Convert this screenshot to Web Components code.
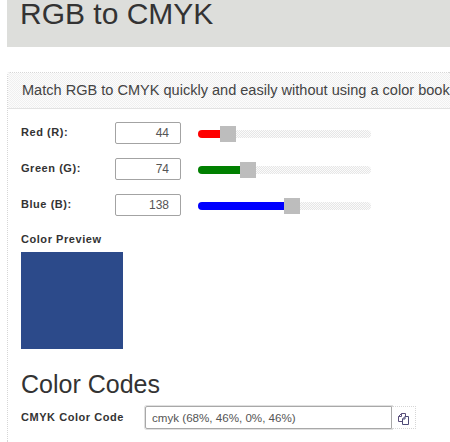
<!DOCTYPE html>
<html>
<head>
<meta charset="utf-8">
<title>RGB to CMYK</title>
<style>
    html, body { margin: 0; height: 442px; overflow: hidden; background: #fff; }
    body { font-family: "Liberation Sans", Arial, sans-serif; color: #333; }
</style>
</head>
<body>
<page-title>RGB to CMYK</page-title>
<tool-card heading="Match RGB to CMYK quickly and easily without using a color book">
    <color-row label="Red (R):" value="44" color="#ff0000"></color-row>
    <color-row label="Green (G):" value="74" color="#008000"></color-row>
    <color-row label="Blue (B):" value="138" color="#0000ff"></color-row>
    <color-preview label="Color Preview" color="#2c4a8a"></color-preview>
    <code-row heading="Color Codes" label="CMYK Color Code" value="cmyk (68%, 46%, 0%, 46%)"></code-row>
</tool-card>

<script>
class PageTitle extends HTMLElement {
    constructor() {
        super();
        this.attachShadow({ mode: "open" });
    }

    connectedCallback() {
        this.shadowRoot.innerHTML = `
            <style>
                :host {
                    display: block;
                    box-sizing: border-box;
                    width: 443px;
                    height: 47px;
                    margin-left: 7px;
                    padding-left: 13px;
                    background: #dddedb;
                    color: #333;
                    font-size: 30px;
                    line-height: 28px;
                }
            </style>
            <slot></slot>
        `;
    }
}

class ToolCard extends HTMLElement {
    constructor() {
        super();
        this.attachShadow({ mode: "open" });
    }

    connectedCallback() {
        this.shadowRoot.innerHTML = `
            <style>
                :host {
                    display: block;
                    box-sizing: border-box;
                    width: 443px;
                    height: 370px;
                    margin: 25px 0 0 7px;
                    border: 1px dotted #d6d6d6;
                    border-right: 0;
                    border-bottom: 0;
                    border-radius: 3px 0 0 0;
                }
                .head {
                    box-sizing: border-box;
                    height: 36px;
                    padding: 0 14px;
                    /* the reference is a dithered gif, so the grey is a fine checker */
                    background: repeating-conic-gradient(#f0f0f0 0 25%, #fcfcfc 0 50%) 0 0 / 2px 2px;
                    border-bottom: 1px solid #e2e2e2;
                    color: #444;
                    font-size: 14.55px;
                    line-height: 35px;
                    white-space: nowrap;
                }
                .body {
                    padding: 13px 13px 0;
                }
            </style>
            <div class="head">${this.getAttribute("heading")}</div>
            <div class="body"><slot></slot></div>
        `;
    }
}

class ColorSlider extends HTMLElement {
    constructor() {
        super();
        this.attachShadow({ mode: "open" });
    }

    connectedCallback() {
        // same placement as a jquery ui handle: value share of track, pulled back half a handle
        const left = Math.round(this.getAttribute("value") / 255 * 173);
        this.shadowRoot.innerHTML = `
            <style>
                :host {
                    display: block;
                    position: relative;
                    width: 173px;
                    height: 8px;
                    margin-top: 2px;
                    border-radius: 4px;
                    background: repeating-conic-gradient(#e6e6e6 0 25%, #fbfbfb 0 50%) 0 0 / 2px 2px;
                }
                .fill {
                    height: 100%;
                    width: ${left}px;
                    border-radius: 4px 0 0 4px;
                    background: ${this.getAttribute("color")};
                }
                .thumb {
                    position: absolute;
                    top: -4px;
                    left: ${left - 8}px;
                    width: 16px;
                    height: 16px;
                    background: #bdbdbd;
                }
            </style>
            <div class="fill"></div>
            <div class="thumb"></div>
        `;
    }
}

class ColorRow extends HTMLElement {
    constructor() {
        super();
        this.attachShadow({ mode: "open" });
    }

    connectedCallback() {
        this.shadowRoot.innerHTML = `
            <style>
                :host {
                    display: flex;
                    align-items: center;
                    height: 22px;
                    margin-bottom: 14px;
                }
                label {
                    width: 94px;
                    padding-bottom: 2px;
                    font-size: 11px;
                    font-weight: bold;
                    letter-spacing: 0.55px;
                    color: #333;
                }
                .num {
                    box-sizing: border-box;
                    width: 66px;
                    height: 22px;
                    margin-right: 17px;
                    padding-right: 11px;
                    border: 1px solid #a3a3a3;
                    border-radius: 2px;
                    color: #555;
                    font-size: 12px;
                    line-height: 20px;
                    text-align: right;
                }
            </style>
            <label>${this.getAttribute("label")}</label>
            <div class="num">${this.getAttribute("value")}</div>
            <color-slider value="${this.getAttribute("value")}" color="${this.getAttribute("color")}"></color-slider>
        `;
    }
}

class ColorPreview extends HTMLElement {
    constructor() {
        super();
        this.attachShadow({ mode: "open" });
    }

    connectedCallback() {
        this.shadowRoot.innerHTML = `
            <style>
                :host {
                    display: block;
                    padding-top: 3px;
                }
                div {
                    height: 13px;
                    margin-bottom: 6px;
                    font-size: 11px;
                    font-weight: bold;
                    letter-spacing: 0.55px;
                    line-height: 13px;
                }
                span {
                    display: block;
                    width: 102px;
                    height: 97px;
                    background: ${this.getAttribute("color")};
                }
            </style>
            <div>${this.getAttribute("label")}</div>
            <span></span>
        `;
    }
}

class CodeRow extends HTMLElement {
    constructor() {
        super();
        this.attachShadow({ mode: "open" });
    }

    connectedCallback() {
        this.shadowRoot.innerHTML = `
            <style>
                :host {
                    display: block;
                    padding-top: 21px;
                }
                h2 {
                    margin: 0 0 7px;
                    font-size: 25px;
                    font-weight: normal;
                    line-height: 29px;
                    color: #333;
                }
                .row {
                    display: flex;
                    align-items: flex-start;
                }
                label {
                    width: 124px;
                    font-size: 11px;
                    font-weight: bold;
                    letter-spacing: 0.55px;
                    line-height: 22px;
                }
                .code {
                    box-sizing: border-box;
                    width: 247px;
                    height: 23px;
                    padding-left: 6px;
                    border: 1px solid #a8a8a8;
                    border-radius: 2px 0 0 2px;
                    box-shadow: 0 0 0 1px #e0e0e0;
                    color: #555;
                    font-size: 11.6px;
                    line-height: 21px;
                }
                button {
                    display: flex;
                    align-items: center;
                    justify-content: center;
                    box-sizing: border-box;
                    width: 24px;
                    height: 23px;
                    padding: 1px 0 0;
                    border: 1px dotted #d6d6d6;
                    border-left: 0;
                    background: #fff;
                }
            </style>
            <h2>${this.getAttribute("heading")}</h2>
            <div class="row">
                <label>${this.getAttribute("label")}</label>
                <div class="code">${this.getAttribute("value")}</div>
                <button aria-label="Copy">
                    <svg width="13" height="13" viewBox="0 0 13 13" fill="none" stroke-width="1">
                        <path d="M5 9.5H1.5V4.5L4.5 1.5H8.5V4.5M1.5 4.5H4.5V1.5" stroke="#5a4f7b"/>
                        <path d="M8 4.5H11.5V12.5H5.5V7L8 4.5V7H5.5" stroke="#4d4a76"/>
                    </svg>
                </button>
            </div>
        `;
    }
}

customElements.define("page-title", PageTitle);
customElements.define("tool-card", ToolCard);
customElements.define("color-slider", ColorSlider);
customElements.define("color-row", ColorRow);
customElements.define("color-preview", ColorPreview);
customElements.define("code-row", CodeRow);
</script>
</body>
</html>
